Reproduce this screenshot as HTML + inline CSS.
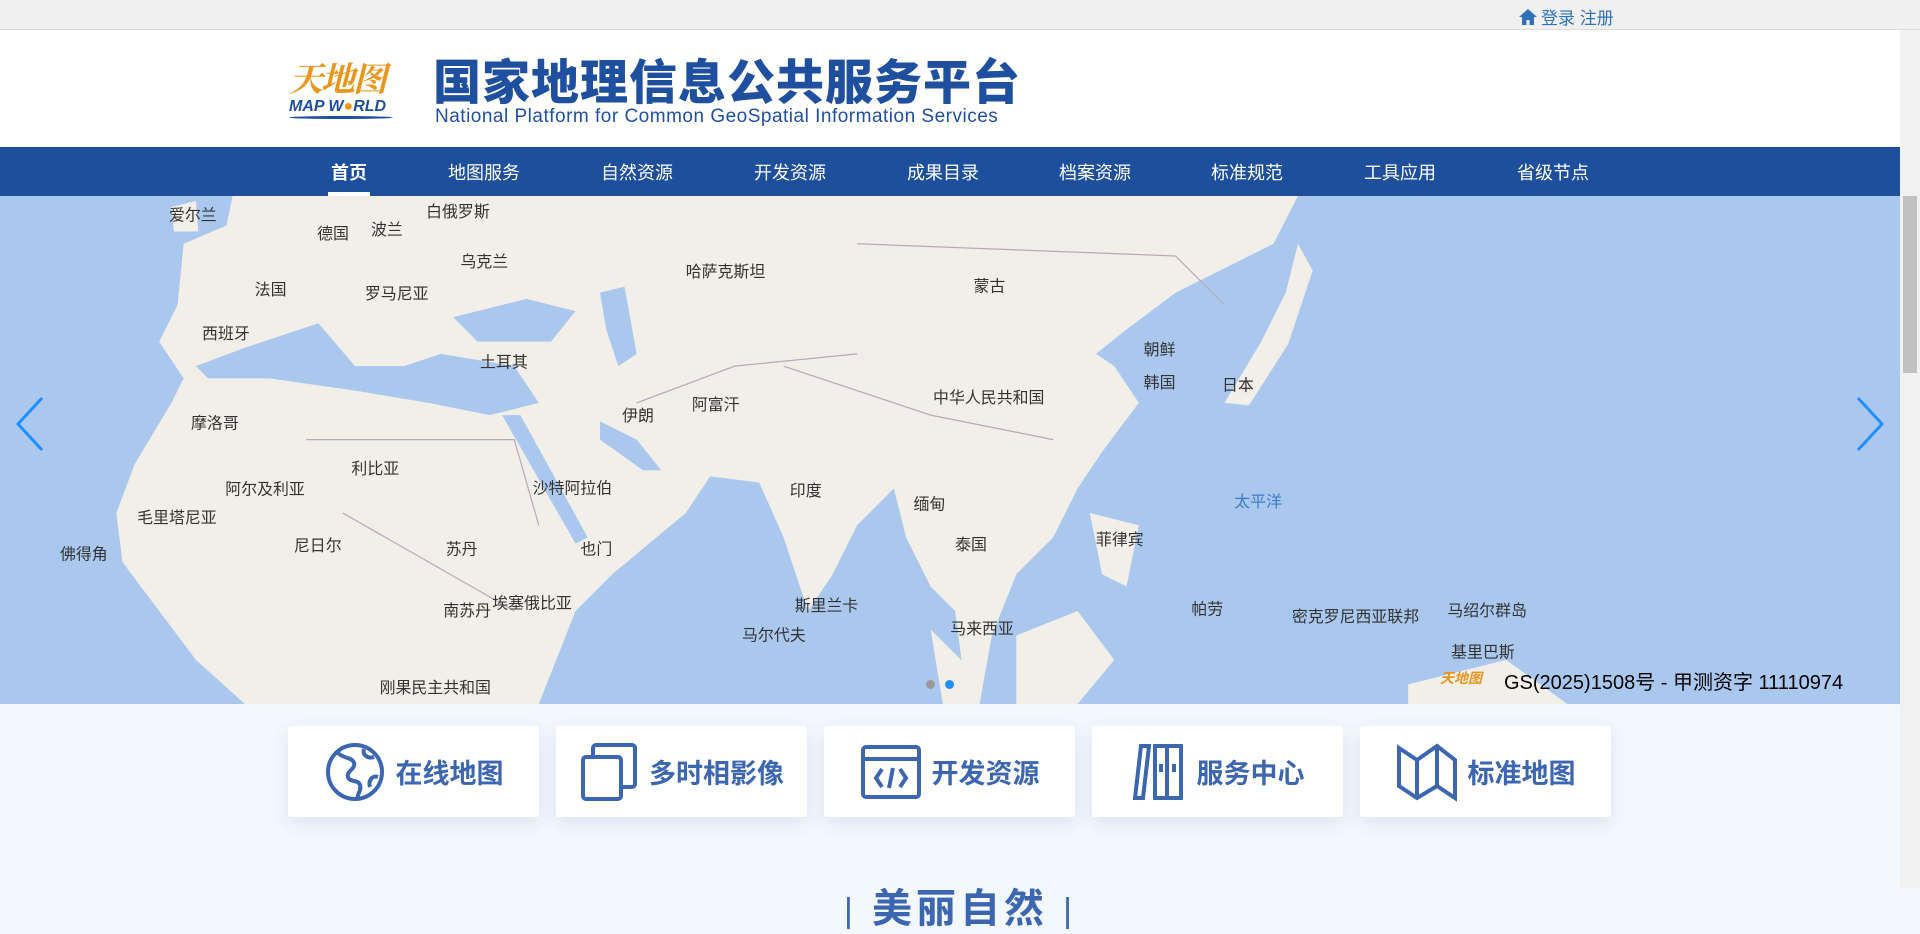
<!DOCTYPE html>
<html><head><meta charset="utf-8"><style>
*{margin:0;padding:0;box-sizing:border-box}
body{width:1920px;height:888px;overflow:hidden;background:#f3f7fe;font-family:"Liberation Sans","Noto Sans CJK SC",sans-serif;position:relative}
.top{position:absolute;left:0;top:0;width:1920px;height:30px;background:#f0f0f0;border-bottom:1px solid #dcdcdc}
.login{position:absolute;left:1518px;top:4px;font-size:17px;color:#2f73b6;display:flex;align-items:center;gap:3px}
.hdr{position:absolute;left:0;top:30px;width:1920px;height:117px;background:#fff}
.nav{position:absolute;left:0;top:147px;width:1920px;height:49px;background:#1e4f9c}
.nav span{position:absolute;top:12px;color:#fff;font-size:18px;transform:translateX(-50%);white-space:nowrap}
.nav .on{font-weight:bold}
.nav .on:after{content:"";position:absolute;left:-3px;right:-3px;bottom:-12px;height:5px;background:#fff}
.map{position:absolute;left:0;top:196px;width:1920px;height:508px;overflow:hidden}
.card{position:absolute;top:726px;width:251px;height:91px;background:#fff;border-radius:3px;box-shadow:0 6px 18px rgba(60,90,150,.12);display:flex;align-items:center;justify-content:center;gap:10px;color:#3d66b0;font-size:27px;font-weight:bold}
.sb{position:absolute;left:1900px;top:30px;width:20px;height:858px;background:#f1f1f1}
.sb i{position:absolute;left:3px;top:166px;width:14px;height:177px;background:#c1c1c1}
</style></head><body>
<div class="top"><div class="login"><svg width="20" height="20" viewBox="0 0 20 20"><path d="M10 2L1 10h3v8h4.5v-5h3v5H16v-8h3z" fill="#2f73b6"/></svg>登录 注册</div></div>
<div class="hdr">
 <div style="position:absolute;left:289px;top:22px;font-family:'Noto Serif CJK SC',serif;font-size:34px;color:#e8961e;font-weight:bold;letter-spacing:-2px;font-style:italic">天地图</div>
 <div style="position:absolute;left:289px;top:68px;font-size:16px;color:#1e4f9c;font-weight:bold;font-style:italic">MAP W<span style="color:#e8961e">●</span>RLD</div>
 <div style="position:absolute;left:289px;top:86px;width:104px;height:3px;background:#1e4f9c;border-radius:50%"></div>
 <div style="position:absolute;left:433px;top:20px;font-size:48px;font-weight:900;color:#1f4f9f;letter-spacing:1px;font-family:'Noto Sans CJK SC',sans-serif;line-height:56px">国家地理信息公共服务平台</div>
 <div style="position:absolute;left:435px;top:76px;font-size:19px;color:#1f4f9f;letter-spacing:0.5px;white-space:nowrap">National Platform for Common GeoSpatial Information Services</div>
</div>
<div class="nav">
 <span class="on" style="left:349px">首页</span><span style="left:484px">地图服务</span><span style="left:637px">自然资源</span><span style="left:790px">开发资源</span><span style="left:943px">成果目录</span><span style="left:1095px">档案资源</span><span style="left:1247px">标准规范</span><span style="left:1400px">工具应用</span><span style="left:1553px">省级节点</span>
</div>
<div class="map"><svg width="1920" height="508" viewBox="0 161 1568 415" preserveAspectRatio="none">
<rect x="0" y="161" width="1568" height="415" fill="#f2efe9"/>
<g fill="#aac8ee">
<polygon points="0,161 190,161 185,185 150,200 145,250 130,280 150,310 140,330 110,380 95,420 100,460 130,500 160,540 200,576 0,576"/>
<polygon points="160,300 200,285 260,265 290,300 330,300 360,290 420,300 440,330 400,340 350,330 290,320 220,310 170,310"/>
<polygon points="370,260 430,245 470,255 450,280 390,280"/>
<polygon points="490,240 510,235 520,290 505,300 495,270"/>
<polygon points="410,340 425,340 480,440 470,445"/>
<polygon points="490,345 520,360 540,385 525,385 490,360"/>
<polygon points="440,576 470,500 500,470 530,445 560,420 580,390 620,395 640,440 660,500 680,470 700,430 730,400 740,440 760,480 780,500 790,576"/>
<polygon points="800,576 810,520 830,470 860,440 880,400 900,370 930,330 910,300 895,290 920,270 960,240 1000,220 1040,200 1060,161 1568,161 1568,576"/>
</g>
<g fill="#f2efe9">
<polygon points="1000,330 1030,280 1050,240 1060,200 1072,222 1052,282 1020,332"/>
<polygon points="890,420 930,430 920,480 900,470"/>
<polygon points="830,520 880,500 910,540 880,576 830,576"/>
<polygon points="1150,560 1230,540 1280,576 1150,576"/>
<polygon points="760,515 800,555 795,576 770,576"/>
<polygon points="140,170 160,165 162,190 142,190"/>
</g>
<g stroke="#b9a9b9" stroke-width="1" fill="none"><path d="M700 200L960 210 1000 250M640 300L760 340 860 360M520 330L600 300 700 290M250 360L420 360 440 430M280 420L420 500"/></g>
<g font-size="13" fill="#333" font-family="Noto Sans CJK SC,sans-serif">
<text x="762" y="330">中华人民共和国</text><text x="795" y="239">蒙古</text><text x="645" y="406">印度</text><text x="560" y="227">哈萨克斯坦</text><text x="998" y="320">日本</text>
<text x="392" y="301">土耳其</text><text x="508" y="345">伊朗</text><text x="565" y="336">阿富汗</text><text x="435" y="404">沙特阿拉伯</text><text x="364" y="454">苏丹</text>
<text x="156" y="351">摩洛哥</text><text x="287" y="388">利比亚</text><text x="184" y="405">阿尔及利亚</text><text x="240" y="451">尼日尔</text><text x="112" y="428">毛里塔尼亚</text>
<text x="298" y="245">罗马尼亚</text><text x="348" y="178">白俄罗斯</text><text x="376" y="219">乌克兰</text><text x="208" y="242">法国</text><text x="165" y="278">西班牙</text>
<text x="138" y="181">爱尔兰</text><text x="259" y="196">德国</text><text x="303" y="193">波兰</text><text x="934" y="291">朝鲜</text><text x="934" y="318">韩国</text>
<text x="895" y="446">菲律宾</text><text x="780" y="450">泰国</text><text x="746" y="417">缅甸</text><text x="649" y="500">斯里兰卡</text><text x="606" y="524">马尔代夫</text><text x="776" y="519">马来西亚</text>
<text x="1055" y="509">密克罗尼西亚联邦</text><text x="1182" y="504">马绍尔群岛</text><text x="1185" y="538">基里巴斯</text><text x="973" y="503">帕劳</text><text x="310" y="567">刚果民主共和国</text>
<text x="49" y="458">佛得角</text><text x="474" y="454">也门</text><text x="402" y="498">埃塞俄比亚</text><text x="362" y="504">南苏丹</text><text x="1008" y="415" fill="#3c7cc4">太平洋</text>
</g>
</svg>
<svg style="position:absolute;left:14px;top:200px" width="32" height="56" viewBox="0 0 32 56"><path d="M28 2L4 28l24 26" stroke="#1e8fff" stroke-width="3" fill="none"/></svg>
<svg style="position:absolute;left:1854px;top:200px" width="32" height="56" viewBox="0 0 32 56"><path d="M4 2l24 26L4 54" stroke="#1e8fff" stroke-width="3" fill="none"/></svg>
<div style="position:absolute;left:926px;top:484px;width:9px;height:9px;border-radius:50%;background:#999"></div>
<div style="position:absolute;left:945px;top:484px;width:9px;height:9px;border-radius:50%;background:#1e8fff"></div>
<div style="position:absolute;left:1440px;top:472px;font-size:14px;color:#e8961e;font-weight:bold;font-style:italic">天地图</div>
<div style="position:absolute;left:1504px;top:470px;font-size:20px;color:#000">GS(2025)1508号 - 甲测资字 11110974</div>
</div>
<div class="card" style="left:288px"><svg width="62" height="62" viewBox="0 0 62 62" fill="none" stroke="#3d66b0" stroke-width="4"><circle cx="31" cy="31" r="27"/><path d="M14 12c6 6 14 4 16 10s-8 8-6 14 10 2 12 8-4 10-2 14M40 8c-2 6 4 10 10 8M54 36c-6-2-10 4-8 10"/></svg>在线地图</div>
<div class="card" style="left:556px"><svg width="60" height="62" viewBox="0 0 60 62" fill="none" stroke="#3d66b0" stroke-width="4"><rect x="4" y="16" width="38" height="42" rx="3"/><path d="M14 16V7a3 3 0 013-3h36a3 3 0 013 3v36a3 3 0 01-3 3h-11"/></svg>多时相影像</div>
<div class="card" style="left:824px"><svg width="62" height="56" viewBox="0 0 62 56" fill="none" stroke="#3d66b0" stroke-width="4"><rect x="3" y="3" width="56" height="50" rx="3"/><path d="M3 15h56M22 25l-6 9 6 9M40 25l6 9-6 9M33 24l-4 20"/></svg>开发资源</div>
<div class="card" style="left:1092px"><svg width="56" height="60" viewBox="0 0 56 60" fill="none" stroke="#3d66b0" stroke-width="4"><path d="M10 4h8L12 56H4zM24 4h12v52H24zM36 4h14v52H36zM30 22v8M43 22v8"/></svg>服务中心</div>
<div class="card" style="left:1360px"><svg width="62" height="60" viewBox="0 0 62 60" fill="none" stroke="#3d66b0" stroke-width="4"><path d="M3 6l18 12L41 4l18 14v38L41 44 21 56 3 44zM21 18v38M41 4v40"/></svg>标准地图</div>
<div style="position:absolute;left:0;width:1920px;top:876px;text-align:center;font-size:40px;font-weight:bold;color:#3d66b0;letter-spacing:4px"><span style="font-weight:normal;font-size:34px">|</span> 美丽自然 <span style="font-weight:normal;font-size:34px">|</span></div>
<div class="sb"><i></i></div>
</body></html>
